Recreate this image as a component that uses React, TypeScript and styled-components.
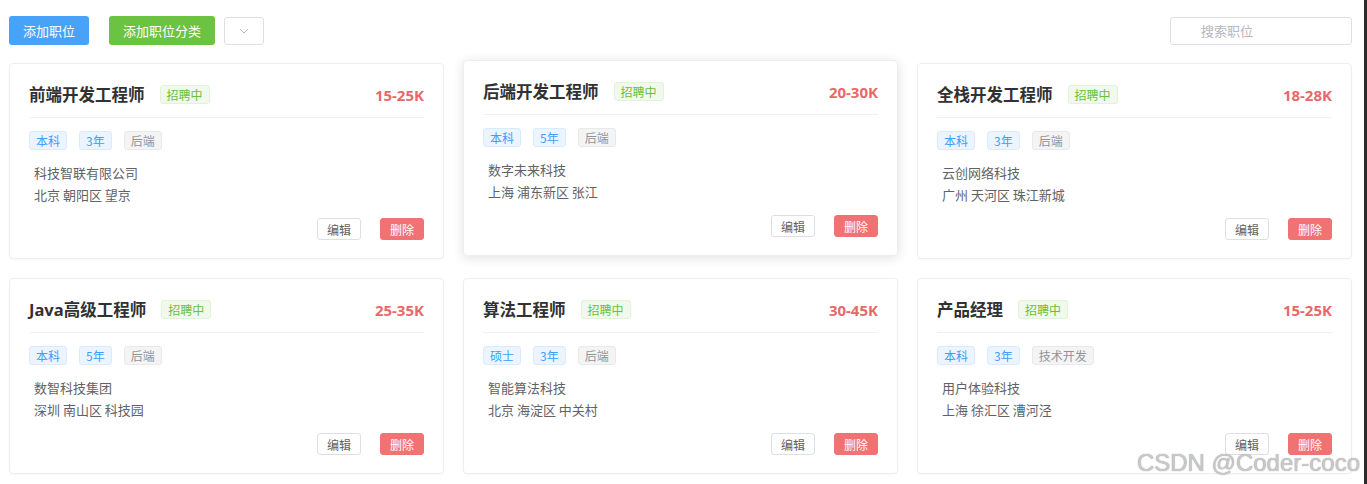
import React from 'react';
import styled, { createGlobalStyle } from 'styled-components';

interface IJob {
  title: string;
  salary: string;
  tags: string[];
  category: string;
  company: string;
  location: string;
}

const jobs: IJob[] = [
  { title: '前端开发工程师', salary: '15-25K', tags: ['本科', '3年'], category: '后端', company: '科技智联有限公司', location: '北京 朝阳区 望京' },
  { title: '后端开发工程师', salary: '20-30K', tags: ['本科', '5年'], category: '后端', company: '数字未来科技', location: '上海 浦东新区 张江' },
  { title: '全栈开发工程师', salary: '18-28K', tags: ['本科', '3年'], category: '后端', company: '云创网络科技', location: '广州 天河区 珠江新城' },
  { title: 'Java高级工程师', salary: '25-35K', tags: ['本科', '5年'], category: '后端', company: '数智科技集团', location: '深圳 南山区 科技园' },
  { title: '算法工程师', salary: '30-45K', tags: ['硕士', '3年'], category: '后端', company: '智能算法科技', location: '北京 海淀区 中关村' },
  { title: '产品经理', salary: '15-25K', tags: ['本科', '3年'], category: '技术开发', company: '用户体验科技', location: '上海 徐汇区 漕河泾' },
];

const GlobalStyle = createGlobalStyle`
  html, body {
    margin: 0;
    padding: 0;
    background: #fff;
  }
  body {
    font-family: "Noto Sans", "Noto Sans CJK SC", sans-serif;
    color: #606266;
  }
`;

const Page = styled.div`
  position: relative;
  box-sizing: border-box;
  width: 1367px;
  min-height: 484px;
  padding: 16px 12px 0 9px;
  border-right: 3px solid #2b2b2b;
  overflow: hidden;
`;

const Toolbar = styled.div`
  display: flex;
  align-items: center;
  height: 29px;
  margin-bottom: 18px;
`;

const ActionButton = styled.button<{ $color: string; $width: number }>`
  box-sizing: border-box;
  width: ${p => p.$width}px;
  height: 29px;
  margin-right: ${p => (p.$width > 90 ? 9 : 20)}px;
  border: none;
  border-radius: 3px;
  background: ${p => p.$color};
  color: #fff;
  font-family: "Noto Sans CJK SC", sans-serif;
  font-size: 13px;
  padding: 0;
`;

const DropButton = styled.button`
  box-sizing: border-box;
  width: 40px;
  height: 28px;
  border: 1px solid #dcdfe6;
  border-radius: 3px;
  background: #fff;
  display: flex;
  align-items: center;
  justify-content: center;
  padding: 0;
`;

const Search = styled.input`
  box-sizing: border-box;
  margin-left: auto;
  width: 182px;
  height: 28px;
  border: 1px solid #dcdfe6;
  border-radius: 3px;
  padding-left: 30px;
  font-family: "Noto Sans CJK SC", sans-serif;
  font-size: 13px;
  outline: none;
  &::placeholder {
    color: #b4b7bd;
  }
`;

const Grid = styled.div`
  display: grid;
  grid-template-columns: repeat(3, 435px);
  column-gap: 19px;
  row-gap: 19px;
`;

const Card = styled.div<{ $hover?: boolean }>`
  box-sizing: border-box;
  height: 196px;
  padding: 19px 19px 20px 19px;
  border: 1px solid #ebeef5;
  border-radius: 4px;
  background: #fff;
  transform: ${p => (p.$hover ? 'translateY(-3px)' : 'none')};
  box-shadow: ${p => (p.$hover ? '0 2px 12px rgba(0, 0, 0, 0.12)' : '0 1px 2px rgba(0, 0, 0, 0.03)')};
`;

const CardHead = styled.div`
  display: flex;
  align-items: center;
  height: 23px;
  padding-bottom: 11px;
  border-bottom: 1px solid #f0f1f4;
`;

const Title = styled.div`
  font-family: "Noto Sans", "Noto Sans CJK SC", sans-serif;
  font-size: 16.5px;
  font-weight: 700;
  color: #303133;
  line-height: 23px;
`;

const Status = styled.span`
  box-sizing: border-box;
  margin-left: 15px;
  height: 19px;
  line-height: 17px;
  padding: 0 6px;
  border: 1px solid #e1f3d8;
  border-radius: 3px;
  background: #f0f9eb;
  color: #67c23a;
  font-family: "Noto Sans CJK SC", sans-serif;
  font-size: 12px;
`;

const Salary = styled.div`
  margin-left: auto;
  font-family: "Noto Sans", sans-serif;
  font-size: 15px;
  font-weight: 700;
  color: #e8686a;
`;

const TagRow = styled.div`
  display: flex;
  gap: 12px;
  margin-top: 13px;
`;

const Tag = styled.span<{ $gray?: boolean }>`
  box-sizing: border-box;
  height: 19px;
  line-height: 17px;
  padding: 0 6px;
  border: 1px solid ${p => (p.$gray ? '#e9e9eb' : '#d9ecff')};
  border-radius: 3px;
  background: ${p => (p.$gray ? '#f4f4f5' : '#ecf5ff')};
  color: ${p => (p.$gray ? '#909399' : '#409eff')};
  font-family: "Noto Sans CJK SC", sans-serif;
  font-size: 12px;
`;

const Info = styled.div`
  margin-top: 12px;
  padding-left: 5px;
  font-family: "Noto Sans CJK SC", sans-serif;
  font-size: 13px;
  line-height: 22px;
  color: #606266;
`;

const Footer = styled.div`
  display: flex;
  justify-content: flex-end;
  gap: 19px;
  margin-top: 12px;
`;

const SmallButton = styled.button<{ $danger?: boolean }>`
  box-sizing: border-box;
  width: 44px;
  height: 22px;
  padding: 0;
  border: 1px solid ${p => (p.$danger ? '#f07272' : '#dcdfe6')};
  border-radius: 3px;
  background: ${p => (p.$danger ? '#f07272' : '#fff')};
  color: ${p => (p.$danger ? '#fff' : '#606266')};
  font-family: "Noto Sans CJK SC", sans-serif;
  font-size: 12px;
`;

const Watermark = styled.div`
  position: absolute;
  right: 4px;
  bottom: 11px;
  font-family: "Liberation Sans", Arial, sans-serif;
  font-size: 24px;
  line-height: 20px;
  color: rgba(205, 205, 205, 0.95);
  text-shadow: 0 0 1px #8a8a8a;
  pointer-events: none;
`;

const JobCard = ({ job, hover }: { job: IJob; hover?: boolean }) => (
  <Card $hover={hover}>
    <CardHead>
      <Title>{job.title}</Title>
      <Status>招聘中</Status>
      <Salary>{job.salary}</Salary>
    </CardHead>
    <TagRow>
      {job.tags.map(t => (
        <Tag key={t}>{t}</Tag>
      ))}
      <Tag $gray>{job.category}</Tag>
    </TagRow>
    <Info>
      <div>{job.company}</div>
      <div>{job.location}</div>
    </Info>
    <Footer>
      <SmallButton>编辑</SmallButton>
      <SmallButton $danger>删除</SmallButton>
    </Footer>
  </Card>
);

export default function App() {
  return (
    <Page>
      <GlobalStyle />
      <Toolbar>
        <ActionButton $color="#48a2f8" $width={80}>添加职位</ActionButton>
        <ActionButton $color="#6cc241" $width={106}>添加职位分类</ActionButton>
        <DropButton>
          <svg width="10" height="6" viewBox="0 0 10 6">
            <path d="M1 1l4 4 4-4" fill="none" stroke="#b4b7bd" strokeWidth="1" />
          </svg>
        </DropButton>
        <Search placeholder="搜索职位" />
      </Toolbar>
      <Grid>
        {jobs.map((job, i) => (
          <JobCard key={job.title} job={job} hover={i === 1} />
        ))}
      </Grid>
      <Watermark>CSDN @Coder-coco</Watermark>
    </Page>
  );
}
